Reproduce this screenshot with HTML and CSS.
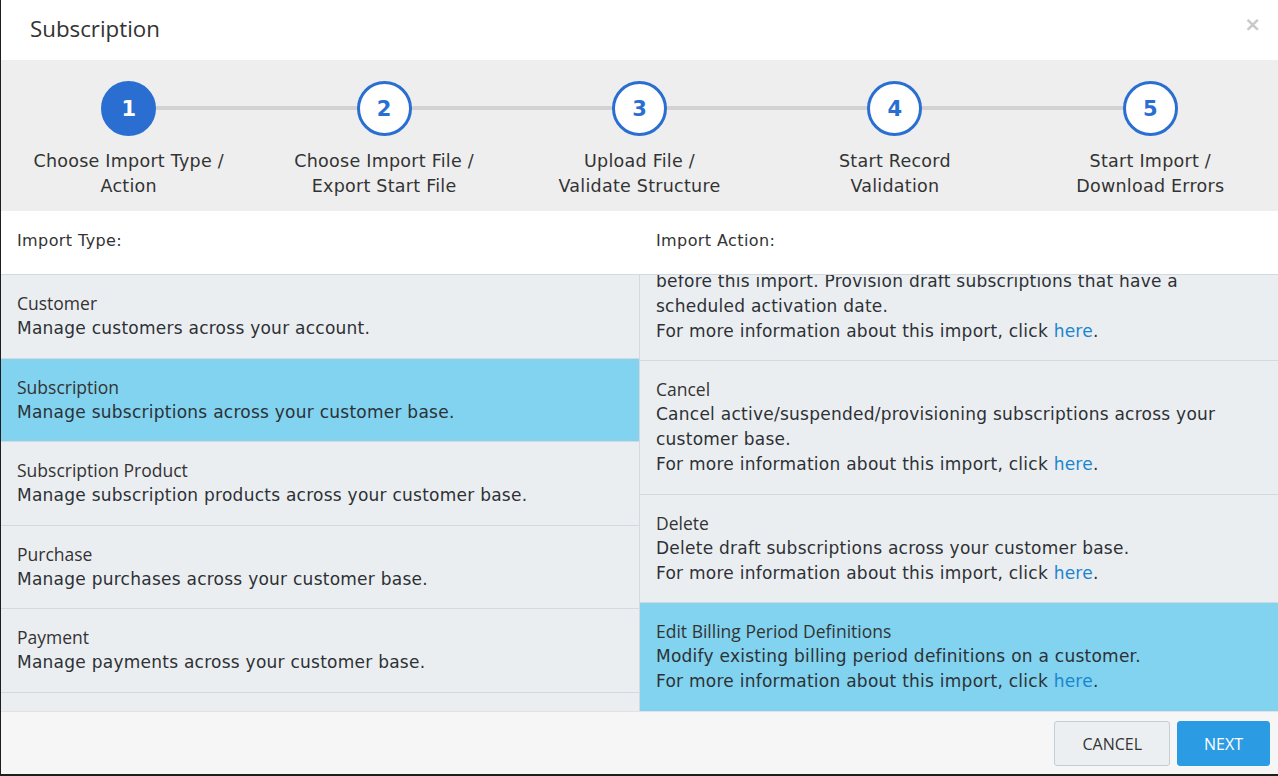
FILE: index.html
```html
<!DOCTYPE html>
<html lang="en">
<head>
    <meta charset="UTF-8">
    <meta name="viewport" content="width=device-width, initial-scale=1.0">
    <title>Subscription Import</title>
    <link rel="stylesheet" href="styles.css">
</head>
<body>
    <div class="modal">
        <!-- Title bar -->
        <div class="modal-header">
            <h1>Subscription</h1>
            <span class="close">&times;</span>
        </div>

        <!-- Wizard steps -->
        <div class="steps">
            <div class="step active">
                <div class="step-num">1</div>
                <div class="step-label">Choose Import Type /<br>Action</div>
            </div>
            <div class="step">
                <div class="step-num">2</div>
                <div class="step-label">Choose Import File /<br>Export Start File</div>
            </div>
            <div class="step">
                <div class="step-num">3</div>
                <div class="step-label">Upload File /<br>Validate Structure</div>
            </div>
            <div class="step">
                <div class="step-num">4</div>
                <div class="step-label">Start Record<br>Validation</div>
            </div>
            <div class="step">
                <div class="step-num">5</div>
                <div class="step-label">Start Import /<br>Download Errors</div>
            </div>
        </div>

        <div class="picker">
            <div class="col-head">Import Type:</div>
            <div class="col-head right">Import Action:</div>

            <div class="list">
                <div class="item">
                    <div class="item-title">Customer</div>
                    <div class="item-desc">Manage customers across your account.</div>
                </div>
                <div class="item selected">
                    <div class="item-title">Subscription</div>
                    <div class="item-desc">Manage subscriptions across your customer base.</div>
                </div>
                <div class="item">
                    <div class="item-title">Subscription Product</div>
                    <div class="item-desc">Manage subscription products across your customer base.</div>
                </div>
                <div class="item">
                    <div class="item-title">Purchase</div>
                    <div class="item-desc">Manage purchases across your customer base.</div>
                </div>
                <div class="item">
                    <div class="item-title">Payment</div>
                    <div class="item-desc">Manage payments across your customer base.</div>
                </div>
            </div>

            <!-- actions list sits scrolled to its end -->
            <div class="list right bottom">
                <div class="item">
                    <div class="item-desc">before this import. Provision draft subscriptions that have a scheduled activation date.</div>
                    <div class="item-desc">For more information about this import, click <a href="#">here</a>.</div>
                </div>
                <div class="item">
                    <div class="item-title">Cancel</div>
                    <div class="item-desc">Cancel active/suspended/provisioning subscriptions across your customer base.</div>
                    <div class="item-desc">For more information about this import, click <a href="#">here</a>.</div>
                </div>
                <div class="item">
                    <div class="item-title">Delete</div>
                    <div class="item-desc">Delete draft subscriptions across your customer base.</div>
                    <div class="item-desc">For more information about this import, click <a href="#">here</a>.</div>
                </div>
                <div class="item selected">
                    <div class="item-title">Edit Billing Period Definitions</div>
                    <div class="item-desc">Modify existing billing period definitions on a customer.</div>
                    <div class="item-desc">For more information about this import, click <a href="#">here</a>.</div>
                </div>
            </div>
        </div>

        <div class="modal-footer">
            <button class="btn">Cancel</button>
            <button class="btn primary">Next</button>
        </div>
    </div>
</body>
</html>
```

FILE: styles.css
```css
:root {
    --blue: #2a6ed2;
    --list-bg: #ebeef1;
    --selected: #81d3f0;
    --line: #d3d9de;
    --text: #2d3135;
}

body {
    margin: 0;
    background: #1e1e1e;
    font-family: "DejaVu Sans", Verdana, sans-serif;
    color: var(--text);
}

.modal {
    margin-left: 1px;
    width: 1277px;
    height: 774px;
    background: #fff;
    display: flex;
    flex-direction: column;
    overflow: hidden;
}

.modal-header {
    height: 60px;
    display: flex;
    align-items: center;
    justify-content: space-between;
    padding: 0 17px 0 29px;
    box-sizing: border-box;
    flex: none;
}

.modal-header h1 {
    margin: 0;
    font-family: "Open Sans", sans-serif;
    font-weight: 400;
    font-size: 22.3px;
    color: #333;
    margin-top: -3px;
}

.close {
    font-size: 20px;
    font-weight: bold;
    color: #c8c8c8;
    margin-top: -13px;
}

/* stepper */
.steps {
    flex: none;
    display: grid;
    grid-template-columns: repeat(5, 1fr);
    background: #eeeeee;
    padding: 21px 0 12px;
}

.step {
    position: relative;
    display: flex;
    flex-direction: column;
    align-items: center;
}

.step:not(:last-child)::after {
    content: "";
    position: absolute;
    top: 25px;
    left: 50%;
    width: 100%;
    height: 4px;
    background: #d2d2d2;
}

.step-num {
    position: relative;
    z-index: 1;
    width: 55px;
    height: 55px;
    box-sizing: border-box;
    border: 3px solid var(--blue);
    border-radius: 50%;
    background: #fff;
    color: var(--blue);
    font-weight: bold;
    font-size: 21px;
    display: flex;
    align-items: center;
    justify-content: center;
}

.step.active .step-num {
    background: var(--blue);
    color: #fff;
}

.step-label {
    margin-top: 13px;
    text-align: center;
    font-size: 17.5px;
    letter-spacing: 0.25px;
    line-height: 25px;
    color: #333;
}

/* type / action picker */
.picker {
    flex: 1;
    min-height: 0;
    display: grid;
    grid-template-columns: 638px 1fr;
    grid-template-rows: 64px 1fr;
}

.col-head {
    font-size: 16px;
    letter-spacing: 0.4px;
    padding: 20px 16px 0;
    border-bottom: 1px solid var(--line);
    color: #333;
}

.col-head.right {
    padding-left: 17px;
}

.list {
    background: var(--list-bg);
    overflow: hidden;
    display: flex;
    flex-direction: column;
}

.list.right {
    border-left: 1px solid var(--line);
}

.list.bottom {
    justify-content: flex-end;
}

.item {
    flex: none;
    padding: 16.25px 16px;
    border-bottom: 1px solid var(--line);
    line-height: 25px;
}

.list.bottom .item:last-child {
    border-bottom: none;
    padding-bottom: 16.75px;
}

.item.selected {
    background: var(--selected);
}

.item-title {
    font-family: "Open Sans", sans-serif;
    font-size: 17.5px;
    color: #333;
}

.item-desc {
    font-size: 17px;
    letter-spacing: 0.25px;
}

.item-desc a {
    color: #1b85cf;
    text-decoration: none;
}

.modal-footer {
    flex: none;
    height: 63px;
    box-sizing: border-box;
    border-top: 1px solid #e2e2e2;
    background: #f6f6f6;
    display: flex;
    justify-content: flex-end;
    align-items: flex-start;
    gap: 7px;
    padding: 9px 8px 0 0;
}

.btn {
    height: 45px;
    padding: 0 27px;
    border: 1px solid #c6cdd2;
    border-radius: 3px;
    background: #ebeff2;
    color: #333;
    font-family: "Open Sans", sans-serif;
    font-size: 16px;
    text-transform: uppercase;
    cursor: pointer;
}

.btn.primary {
    background: #2b9be3;
    border-color: #2b9be3;
    color: #fff;
    padding: 0 26px;
}
```
